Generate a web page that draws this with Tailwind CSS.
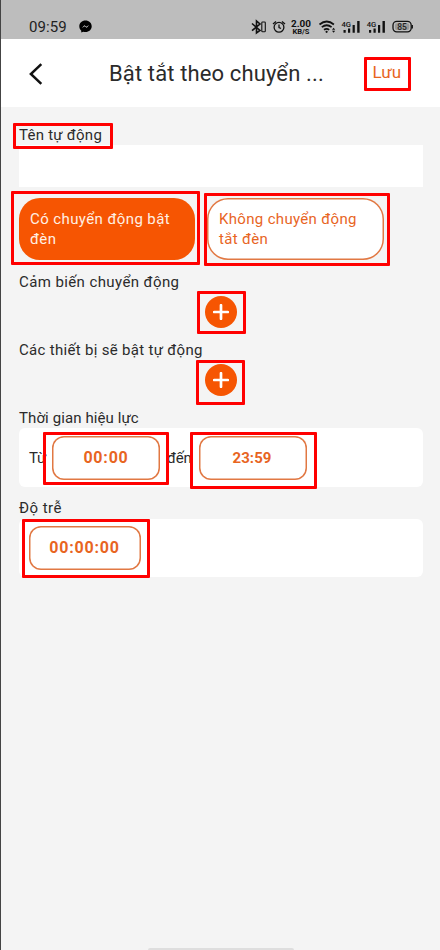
<!DOCTYPE html>
<html lang="vi">
<head>
<meta charset="utf-8">
<title>Bật tắt theo chuyển động</title>
<script src="https://cdn.jsdelivr.net/npm/@tailwindcss/browser@4"></script>
</head>
<body class="bg-[#f4f4f4]">
<div class="relative w-[440px] h-[950px] overflow-hidden bg-[#f4f4f4] border-l border-[#444] font-['Roboto','Noto_Sans',sans-serif] text-[#2b2b2b] flex flex-col">
  <div class="h-[39px] shrink-0 bg-[#bdbdbd] pl-7 pr-[26px] pt-[14px] flex text-black">
    <span class="w-[50px] text-[15px] leading-[26px] tracking-[0.1px] text-[#222]">09:59</span>
    <svg class="mt-[6px]" width="13" height="13" viewBox="0 0 13 13"><path d="M6.5.4C2.900.4.3 3 .3 6.300c0 1.800.7 3.200 1.900 4.300l.1 2 2-.8c.7.2 1.400.3 2.200.3 3.600 0 6.200-2.500 6.200-5.800S10.100.4 6.500.4z"/><path d="M2.900 8 5.400 5.200 7.300 6.800 10.100 4.900 7.700 7.800 5.700 6.300z" fill="#ddd"/></svg>
    <div class="ml-auto flex">
      <svg width="163" height="25" viewBox="251 14 163 25" fill="none" stroke="#111" stroke-width="1.300" font-family="Roboto, sans-serif">
        <path d="M252 23.500 260 30.500 256.500 33V21l3.500 3-8 6.700" stroke-width="1.600"/>
        <rect x="261.800" y="22" width="3.500" height="9.700" rx=".8" stroke-width="1.100"/>
        <circle cx="279" cy="27.300" r="4.900"/><path d="M279 24.500v3l2 1M273 24l3-2.600M285 24l-3-2.600"/>
        <g fill="#111" stroke="none"><text x="291" y="26.500" font-size="9" font-weight="700" textLength="20" lengthAdjust="spacingAndGlyphs">2.00</text>
        <text x="292.500" y="33.500" font-size="6.500" font-weight="700" textLength="17" lengthAdjust="spacingAndGlyphs">KB/S</text></g>
        <path d="M319.500 24.500q7.200-6 14.400 0M321.800 27.200q4.900-3.900 9.800 0M324 29.800q2.700-2 5.200 0" stroke-width="1.700"/>
        <circle cx="326.600" cy="31.800" r="1.100" fill="#111" stroke="none"/>
        <path d="m332 29.700 1.600-2 1.600 2zM332 30.700l1.600 2 1.600-2z" fill="#111" stroke="none"/>
        <g fill="#111" stroke="none"><text x="341.500" y="26.500" font-size="8" font-weight="500" textLength="9.500" lengthAdjust="spacingAndGlyphs">4G</text>
        <path d="M343.500 30h2.200v2.700h-2.200zM348 28.500h2.200v4.200H348zM352.600 25h2.200v7.700h-2.200zM357.200 21h2.400v11.700h-2.400z"/>
        <text x="366.800" y="26.500" font-size="8" font-weight="500" textLength="9.500" lengthAdjust="spacingAndGlyphs">4G</text>
        <path d="M369 30h2.200v2.700H369zM373.500 28.500h2.200v4.200h-2.200zM378 25h2.200v7.700H378zM382.500 21h2.400v11.700h-2.400z"/></g>
        <rect x="393" y="21.400" width="18.200" height="10.400" rx="3.800"/><path d="M412.300 25v3.500"/>
        <rect x="395" y="23.300" width="14.200" height="6.600" rx="2" fill="#999" stroke="none"/>
        <text x="397.300" y="29.900" font-size="8.500" fill="#222" stroke="none" font-weight="500" textLength="9.500">85</text>
      </svg>
    </div>
  </div>

  <header class="h-[68px] shrink-0 bg-white flex items-center pl-7">
    <svg width="14" height="24" viewBox="0 0 14 24" class="mt-[2px]" fill="none" stroke="#111" stroke-width="2.500"><path d="M12.300 2.200 1.900 12l10.400 9.800"/></svg>
    <h1 class="ml-[66px] w-[263.500px] text-[22px] tracking-[0.130px] whitespace-nowrap">Bật tắt theo chuyển ...</h1>
    <button class="text-[17px] text-[#e8651f] whitespace-nowrap">Lưu</button>
  </header>

  <main class="pl-[18px] pr-[17px] pt-[18px] flex flex-col text-[15px] leading-5">
    <label class="h-5 tracking-[0.250px]">Tên tự động</label>
    <div class="h-[42px] bg-white"></div>
    <div class="mt-[11px] flex gap-3">
      <button class="w-[176px] h-[62px] rounded-[21px] bg-[#f65502] text-[#fff0e4] text-left pl-[11px] tracking-[0.400px] whitespace-nowrap">Có chuyển động bật<br>đèn</button>
      <button class="w-[177px] h-[62px] rounded-[21px] bg-white shadow-[inset_0_0_0_1.5px_#e17843] text-[#e8651f] text-left pl-3 tracking-[0.330px] whitespace-nowrap">Không chuyển động<br>tắt đèn</button>
    </div>
    <h2 class="mt-3 h-5 tracking-[0.400px]">Cảm biến chuyển động</h2>
    <button class="mt-1 ml-[186px] size-8 rounded-full bg-[#f65502] flex items-center justify-center"><svg width="16" height="16" stroke="#fff" stroke-width="2.700" stroke-linecap="round"><path d="M8 1.200v13.600M1.200 8h13.600"/></svg></button>
    <h2 class="mt-3 h-5 tracking-[0.310px]">Các thiết bị sẽ bật tự động</h2>
    <button class="mt-1 ml-[186px] size-8 rounded-full bg-[#f65502] flex items-center justify-center"><svg width="16" height="16" stroke="#fff" stroke-width="2.700" stroke-linecap="round"><path d="M8 1.200v13.600M1.200 8h13.600"/></svg></button>
    <h2 class="mt-3 h-5 tracking-[0.100px]">Thời gian hiệu lực</h2>
    <div class="h-[59px] rounded-md bg-white flex items-center pl-[10px]">
      <span class="w-[23px] tracking-[-0.2px]">Từ</span>
      <button class="w-[108px] h-11 rounded-xl shadow-[inset_0_0_0_1.5px_#e17843] text-[#e8651f] font-bold text-[16px] tracking-[0.800px]">00:00</button>
      <span class="w-[39px] pl-[7px] tracking-[-0.2px]">đến</span>
      <button class="w-[108px] h-11 rounded-xl shadow-[inset_0_0_0_1.5px_#e17843] text-[#e8651f] font-bold tracking-[0.100px] pr-[2px]">23:59</button>
    </div>
    <h2 class="mt-[11px] h-[21px] tracking-[0.450px]">Độ trễ</h2>
    <div class="h-[58px] rounded-md bg-white flex items-center pl-[10px]">
      <button class="w-[112px] h-11 rounded-xl shadow-[inset_0_0_0_1.5px_#e17843] text-[#e8651f] font-bold text-[16px] tracking-[0.800px] pr-px">00:00:00</button>
    </div>
  </main>
  <div class="mt-auto ml-[147px] w-[146px] h-[2px] rounded-t bg-[#dedede]"></div>

  <!-- annotation frames -->
  <div class="absolute left-[363px] top-[57px] w-[47px] h-[34px] border-3 border-[#f00] rounded-[1px]"></div>
  <div class="absolute left-[12px] top-[123px] w-[100px] h-[26px] border-3 border-[#f00] rounded-[1px]"></div>
  <div class="absolute left-[10px] top-[191px] w-[189px] h-[74px] border-3 border-[#f00] rounded-[1px]"></div>
  <div class="absolute left-[203px] top-[193px] w-[186px] h-[73px] border-3 border-[#f00] rounded-[1px]"></div>
  <div class="absolute left-[196px] top-[291px] w-[49px] h-[43px] border-3 border-[#f00] rounded-[1px]"></div>
  <div class="absolute left-[195px] top-[360px] w-[49px] h-[45px] border-3 border-[#f00] rounded-[1px]"></div>
  <div class="absolute left-[42px] top-[432px] w-[126px] h-[53px] border-3 border-[#f00] rounded-[1px]"></div>
  <div class="absolute left-[189px] top-[432px] w-[127px] h-[57px] border-3 border-[#f00] rounded-[1px]"></div>
  <div class="absolute left-[21px] top-[519px] w-[128px] h-[59px] border-3 border-[#f00] rounded-[1px]"></div>
</div>
</body>
</html>
